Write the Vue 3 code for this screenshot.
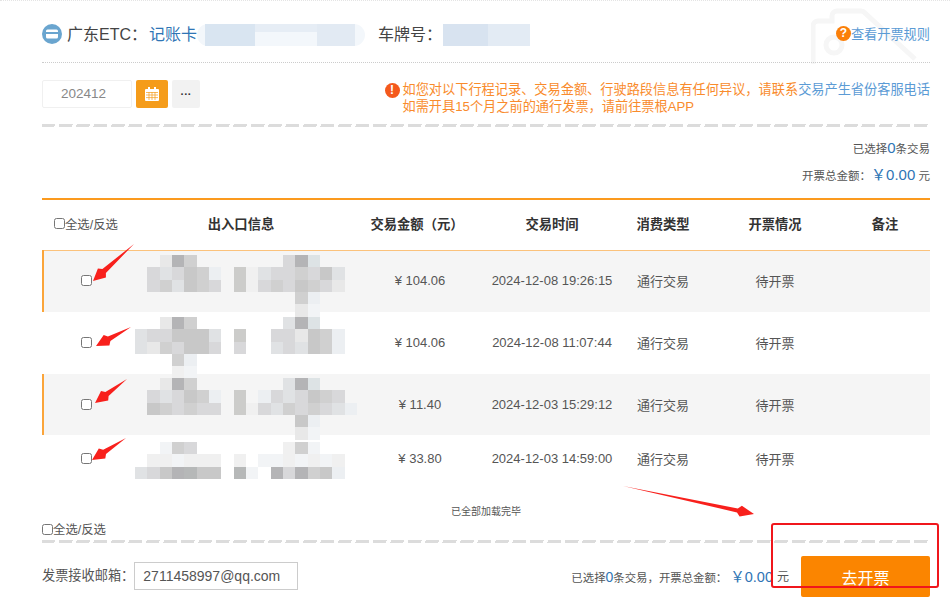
<script setup>
const C = { a: '#e8e8e8', b: '#b4b4b6', c: '#d0d0d0', d: '#d8d8da', e: '#e0e2e4', f: '#eceff2', g: '#ccccca', h: '#f2f4f6', i: '#dde3e5', j: '#c8c8c8', k: '#b6b8b8', l: '#f0f0f0' }
// each line: 18 cells of 12.33px, "." is empty
const mosaics = [
  { top: 5, rows: ['..abc.......dbi...', '.dedjcf.gleddcdje.', '.dcejcd.gldcdjcda.', '.............cf...', '.............ah...'] },
  { top: 5, rows: ['..abc.......ebi...', 'eddjjje.g..ddajcf.', 'eacdjjd.d..edejcf.', '...cf.............', '...lh.............'] },
  { top: 4, rows: ['..abc.......ebi...', '.dedjcf.g.fdedjcd.', '.jcdcdd.gldecdcdef', '.............jf...', '.............ah...'] },
  { top: 7, rows: ['..hcd.......lch...', '.llhlll.l.hhlhlhl.', 'edjbkjj.kh.bdbcjf.'] },
].map((m) => ({
  top: m.top,
  cells: m.rows.flatMap((row, r) =>
    [...row].map((ch, c) => ({ key: r + '-' + c, color: C[ch] || null, r: r + 1, c: c + 1 })).filter((x) => x.color)
  ),
}))

const rows = [
  { amount: '¥ 104.06', time: '2024-12-08 19:26:15', h: 62, alt: true, first: true },
  { amount: '¥ 104.06', time: '2024-12-08 11:07:44', h: 62 },
  { amount: '¥ 11.40', time: '2024-12-03 15:29:12', h: 61, alt: true },
  { amount: '¥ 33.80', time: '2024-12-03 14:59:00', h: 48 },
].map((r, i) => ({ ...r, mosaic: mosaics[i] }))

function arrow(x1, y1, x2, y2, neck, flare, hl) {
  const len = Math.hypot(x2 - x1, y2 - y1)
  const ux = (x2 - x1) / len
  const uy = (y2 - y1) / len
  const px = -uy
  const py = ux
  const nx = x2 - ux * hl
  const ny = y2 - uy * hl
  const nb = x2 - ux * hl * 0.8
  const mb = y2 - uy * hl * 0.8
  return [
    [x1, y1],
    [nx + px * neck, ny + py * neck],
    [nb + px * flare, mb + py * flare],
    [x2, y2],
    [nb - px * flare, mb - py * flare],
    [nx - px * neck, ny - py * neck],
  ].map((p) => p[0].toFixed(1) + ',' + p[1].toFixed(1)).join(' ')
}

const arrows = [
  arrow(134, 244, 93, 281, 2.6, 6, 15),
  arrow(131, 327, 96, 346, 2.6, 6, 15),
  arrow(127, 379, 95, 403, 2.6, 6, 15),
  arrow(126, 438, 92, 460, 2.6, 6, 15),
  arrow(623, 486, 754, 514, 2, 5.5, 17),
]
</script>

<template>
  <div class="page">
    <svg class="watermark" width="108" height="60" viewBox="0 0 108 60" fill="none">
      <path d="M2 58V20a5 5 0 0 1 5-5h14V10a5 5 0 0 1 5-5h24a6 6 0 0 1 4 2l50 46" stroke="#f6f6f6" stroke-width="5" />
      <circle cx="23" cy="39" r="8" stroke="#f6f6f6" stroke-width="5" />
    </svg>

    <header class="head">
      <svg class="card-ico" width="20" height="20" viewBox="0 0 20 20">
        <circle cx="10" cy="10" r="10" fill="#6aa5cf" />
        <rect x="4" y="5.5" width="12" height="9" rx="1.5" fill="#fff" />
        <rect x="4" y="8" width="12" height="2" fill="#6aa5cf" />
      </svg>
      <span class="head-label">广东ETC：</span>
      <span class="head-blue">记账卡</span>
      <span class="smudge smudge-a"><i></i><i></i><i></i></span>
      <span class="head-label plate">车牌号：</span>
      <span class="smudge smudge-b"><i></i><i></i></span>
      <span class="rule">
        <span class="q">?</span><span>查看开票规则</span>
      </span>
    </header>

    <section class="tools">
      <div class="date-group">
        <div class="date">202412</div>
        <button class="cal">
          <svg width="14" height="14" viewBox="0 0 14 14" fill="#fff">
            <path d="M3 0h2v2h4V0h2v2h2a1 1 0 0 1 1 1v10a1 1 0 0 1-1 1H1a1 1 0 0 1-1-1V3a1 1 0 0 1 1-1h2z" />
            <path d="M1 5.5h12M1 8h12M1 10.6h12M4 5v8M7 5v8M10 5v8" stroke="#f59c1a" stroke-width=".7" />
          </svg>
        </button>
        <button class="more">···</button>
      </div>
      <div class="notice">
        <span class="warn">!</span>
        <div class="notice-text">
          <p>如您对以下行程记录、交易金额、行驶路段信息有任何异议，请联系<span class="link">交易产生省份客服电话</span></p>
          <p>如需开具15个月之前的通行发票，请前往票根APP</p>
        </div>
      </div>
    </section>
    <div class="dash"></div>

    <section class="summary">
      <p class="sum-count">已选择<b>0</b>条交易</p>
      <p class="sum-total">开票总金额：<b>￥0.00</b> 元</p>
    </section>

    <div class="table">
      <div class="tr th">
        <label class="all"><input type="checkbox" />全选/反选</label>
        <div>出入口信息</div>
        <div class="amount-head">交易金额（元）</div>
        <div>交易时间</div>
        <div>消费类型</div>
        <div>开票情况</div>
        <div>备注</div>
      </div>
      <div
        v-for="row in rows"
        :key="row.time"
        class="tr td"
        :class="{ alt: row.alt, first: row.first }"
        :style="{ height: row.h + 'px' }"
      >
        <div><input type="checkbox" /></div>
        <div class="info">
          <div class="mosaic" :style="{ top: row.mosaic.top + 'px' }">
            <i
              v-for="cell in row.mosaic.cells"
              :key="cell.key"
              :style="{ background: cell.color, gridRow: cell.r, gridColumn: cell.c }"
            ></i>
          </div>
        </div>
        <div class="amount">{{ row.amount }}</div>
        <div>{{ row.time }}</div>
        <div>通行交易</div>
        <div>待开票</div>
        <div></div>
      </div>
    </div>

    <p class="loaded">已全部加载完毕</p>
    <label class="all bottom-all"><input type="checkbox" />全选/反选</label>
    <div class="dash"></div>

    <footer class="foot">
      <label class="mail">发票接收邮箱：<input type="text" value="2711458997@qq.com" /></label>
      <div class="foot-right">
        <span>已选择<b class="zero">0</b>条交易，开票总金额：</span>
        <b class="money">￥0.00</b>
        <span class="yuan">元</span>
        <button class="go">去开票</button>
      </div>
    </footer>

    <svg class="marks" width="950" height="598" viewBox="0 0 950 598">
      <polygon v-for="(p, i) in arrows" :key="i" :points="p" fill="#f8201c" />
      <rect x="772" y="524" width="166" height="63" rx="2" fill="none" stroke="#f0161c" stroke-width="2" />
    </svg>
  </div>
</template>

<style scoped>
.page {
  position: relative;
  width: 950px;
  height: 598px;
  box-sizing: border-box;
  padding: 0 20px 0 42px;
  overflow: hidden;
  background: #fff;
  color: #444;
  font-family: "Liberation Sans", "Noto Sans CJK SC", sans-serif;
  border-top: 1px dotted #e4e4e4;
}
p { margin: 0; }
b { font-weight: 400; }
button { border: 0; padding: 0; font-family: inherit; }
.watermark { position: absolute; left: 811px; top: 5px; }
.marks { position: absolute; left: 0; top: -1px; pointer-events: none; }

.head {
  position: relative;
  display: flex;
  align-items: center;
  height: 62px;
  padding-top: 3px;
  box-sizing: border-box;
  border-bottom: 1px dotted #ccc;
  font-size: 16px;
}
.card-ico { flex: none; margin: 2px 5px 0 0; }
.head-label { color: #444; }
.head-blue { margin-left: 2px; color: #2f75b5; }
.plate { position: absolute; left: 336px; top: 20px; }
.smudge { display: flex; }
.smudge i { display: block; }
.smudge-a {
  width: 160px;
  height: 22px;
  margin-top: 4px;
  padding-left: 8px;
  border-radius: 11px;
  background: #f3f7fb;
}
.smudge-a i:nth-child(1) { width: 50px; background: #d9e5f1; }
.smudge-a i:nth-child(2) { width: 62px; height: 8px; background: #e6edf5; }
.smudge-a i:nth-child(3) { width: 38px; background: #e2eaf3; }
.smudge-b { position: absolute; left: 401px; top: 23px; width: 87px; height: 22px; }
.smudge-b i:nth-child(1) { width: 45px; background: #d8e3f0; }
.smudge-b i:nth-child(2) { width: 42px; background: #e3ebf4; }
.rule {
  position: absolute;
  right: 0;
  top: 23px;
  display: flex;
  align-items: center;
  color: #5b9bd5;
  font-size: 13.2px;
}
.q {
  width: 15px;
  height: 15px;
  border-radius: 50%;
  background: #fb7f08;
  color: #fff;
  font-size: 12px;
  font-weight: 700;
  line-height: 15px;
  text-align: center;
}

.tools {
  display: flex;
  justify-content: space-between;
  height: 61px;
  padding-top: 17px;
  box-sizing: border-box;
}
.date-group { display: flex; height: 28px; }
.date {
  width: 90px;
  box-sizing: border-box;
  padding-left: 18px;
  border: 1px solid #f0f0f0;
  border-radius: 2px;
  color: #888;
  font-size: 13.5px;
  line-height: 26px;
}
.cal {
  display: flex;
  align-items: center;
  justify-content: center;
  width: 32px;
  margin-left: 4px;
  border-radius: 2px;
  background: #f59c1a;
}
.more {
  width: 28px;
  margin-left: 4px;
  border-radius: 2px;
  background: #f2f2f2;
  color: #333;
  font-size: 11px;
  font-weight: 700;
}
.notice { display: flex; margin-top: 1px; color: #f98b2c; font-size: 13.2px; line-height: 17px; }
.warn {
  flex: none;
  width: 15px;
  height: 15px;
  margin: 2px 3px 0 0;
  border-radius: 50%;
  background: #f4591c;
  color: #fff;
  font-size: 12px;
  font-weight: 700;
  line-height: 15px;
  text-align: center;
}
.link { color: #5b9bd5; }

.dash {
  height: 3px;
  background: repeating-linear-gradient(110deg, #dcdcdc 0 12.5px, transparent 12.5px 16.4px);
}

.summary {
  height: 71px;
  box-sizing: border-box;
  padding-top: 12px;
  color: #555;
  font-size: 11.5px;
  text-align: right;
}
.sum-count b { color: #2f75b5; font-size: 15px; }
.sum-total { margin-top: 7px; }
.sum-total b { color: #2f75b5; font-size: 15px; }

.table { border-top: 2px solid #fb9a1e; }
.tr {
  position: relative;
  display: grid;
  box-sizing: border-box;
  grid-template-columns: 88px 222px 126px 148px 74px 150px 70px 10px;
  align-items: center;
  justify-items: center;
}
.tr input { display: block; width: 11px; height: 11px; margin: 0; }
.th { height: 50px; padding-bottom: 3px; color: #333; font-size: 13.3px; font-weight: 700; }
.amount-head { padding-left: 4px; }
.td { padding-bottom: 1px; color: #555; font-size: 13px; }
.alt { background: #f5f5f5; box-shadow: inset 2px 0 #fba53a; }
.first { box-shadow: inset 2px 0 #fba53a, inset 0 1px #fbc27c; }
.amount { padding-left: 10px; }
.info { position: relative; width: 100%; height: 100%; }
.mosaic {
  position: absolute;
  left: 5px;
  display: grid;
  grid-template-columns: repeat(18, 12.33px);
  grid-auto-rows: 12.33px;
  z-index: 1;
}
.mosaic i { display: block; }

.all {
  display: flex;
  align-items: center;
  color: #555;
  font-size: 12.4px;
  font-weight: 400;
}
.all input { display: block; width: 11px; height: 11px; margin: 0; }
.bottom-all { height: 16px; margin-bottom: 3px; }

.loaded {
  height: 38px;
  padding-top: 22px;
  padding-left: 409px;
  box-sizing: border-box;
  color: #555;
  font-size: 10px;
  line-height: 14px;
}

.foot {
  display: flex;
  justify-content: space-between;
  height: 55px;
  padding-top: 13px;
  box-sizing: border-box;
}
.mail {
  display: flex;
  align-items: flex-start;
  padding-top: 6px;
  color: #555;
  font-size: 13.2px;
  line-height: 28px;
}
.mail input {
  width: 164px;
  height: 28px;
  box-sizing: border-box;
  padding: 0 8px;
  border: 1px solid #ccc;
  color: #555;
  font-family: inherit;
  font-size: 14px;
  outline: 0;
}
.foot-right { display: flex; align-items: flex-start; color: #555; font-size: 11.4px; line-height: 42px; }
.foot-right .zero { color: #2f75b5; font-size: 14px; }
.money { margin-left: 3px; color: #2f75b5; font-size: 14.5px; }
.yuan { margin: 0 12px 0 4px; font-size: 12px; }
.go {
  width: 129px;
  height: 41px;
  border-radius: 2px;
  background: #fb8500;
  color: #fff;
  font-size: 16px;
}
</style>
